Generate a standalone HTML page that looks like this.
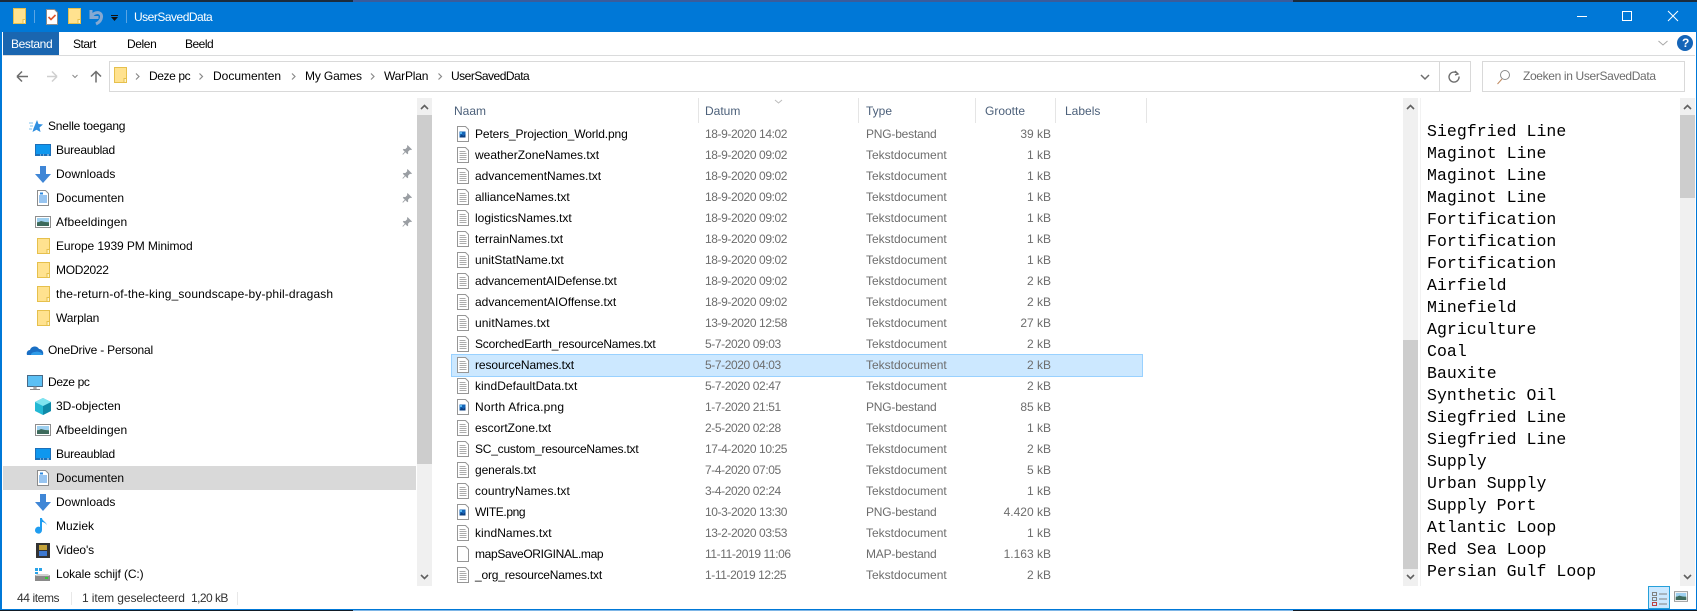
<!DOCTYPE html>
<html><head><meta charset="utf-8"><title>UserSavedData</title>
<style>
html,body{margin:0;padding:0;width:1697px;height:611px;overflow:hidden;background:#fff}
body{font-family:"Liberation Sans",sans-serif;font-size:12px;color:#000;position:relative}
.b{position:absolute}
.t{position:absolute;white-space:nowrap;line-height:16px;height:16px}
svg{position:absolute;left:0;top:0}
.r{position:absolute;left:0;width:1200px;height:16px}
.r span{position:absolute;white-space:nowrap;line-height:16px;top:0}
.n{left:475px}.d{left:705px;color:#6d6d6d;letter-spacing:-.4px}.y{left:866px;color:#6d6d6d}.s{left:951px;width:100px;text-align:right;color:#6d6d6d}
.g{letter-spacing:-.2px}
.h{color:#4c607a}
.p{position:absolute;left:1427px;font-family:"Liberation Mono",monospace;font-size:16.5px;line-height:22px;height:22px;white-space:pre;letter-spacing:.05px}
</style></head><body>
<div class="b" style="left:0;top:0;width:1697px;height:2px;background:#1b2b3c"></div>
<div class="b" style="left:353px;top:0;width:940px;height:2px;background:#3a5c9c"></div>
<div class="b" style="left:0;top:2px;width:1697px;height:30px;background:#0078d7"></div>
<div class="b" style="left:3px;top:32px;width:56px;height:23px;background:#1a66b0"></div>
<div class="b" style="left:3px;top:55px;width:1692px;height:1px;background:#dadbdc"></div>
<div class="b" style="left:109px;top:61px;width:1360px;height:29px;border:1px solid #d9d9d9"></div>
<div class="b" style="left:1439px;top:61px;width:1px;height:30px;background:#d9d9d9"></div>
<div class="b" style="left:1482px;top:61px;width:201px;height:29px;border:1px solid #d9d9d9"></div>
<div class="b" style="left:417px;top:98px;width:15px;height:488px;background:#f0f0f0"></div>
<div class="b" style="left:417px;top:115px;width:15px;height:349px;background:#cdcdcd"></div>
<div class="b" style="left:1403px;top:98px;width:15px;height:488px;background:#f0f0f0"></div>
<div class="b" style="left:1403px;top:340px;width:15px;height:229px;background:#cdcdcd"></div>
<div class="b" style="left:1420px;top:98px;width:1px;height:488px;background:#f2f2f2"></div>
<div class="b" style="left:1680px;top:98px;width:15px;height:488px;background:#f0f0f0"></div>
<div class="b" style="left:1680px;top:115px;width:15px;height:83px;background:#cdcdcd"></div>
<div class="b" style="left:3px;top:466px;width:413px;height:24px;background:#d9d9d9"></div>
<div class="b" style="left:451px;top:354px;width:690px;height:21px;background:#cce8ff;border:1px solid #99d1ff"></div>
<div class="b" style="left:698px;top:98px;width:1px;height:25px;background:#e5e5e5"></div>
<div class="b" style="left:858px;top:98px;width:1px;height:25px;background:#e5e5e5"></div>
<div class="b" style="left:975px;top:98px;width:1px;height:25px;background:#e5e5e5"></div>
<div class="b" style="left:1055px;top:98px;width:1px;height:25px;background:#e5e5e5"></div>
<div class="b" style="left:1146px;top:98px;width:1px;height:25px;background:#e5e5e5"></div>
<div class="b" style="left:71px;top:592px;width:1px;height:13px;background:#e8e8e8"></div>
<div class="b" style="left:237px;top:592px;width:1px;height:13px;background:#e8e8e8"></div>
<div class="b" style="left:1648px;top:586px;width:20px;height:21px;background:#cce8ff;border:1px solid #26a0da"></div>
<div class="b" style="left:0;top:2px;width:2px;height:607px;background:#0078d7"></div>
<div class="b" style="left:1696px;top:2px;width:1px;height:607px;background:#0078d7"></div>
<div class="b" style="left:0;top:609px;width:1697px;height:1px;background:#0078d7"></div>
<div class="b" style="left:0;top:610px;width:1697px;height:1px;background:#111b26"></div>
<div class="b" style="left:353px;top:610px;width:940px;height:1px;background:#7fb6e6"></div>

<svg width="1697" height="611" viewBox="0 0 1697 611">
<defs>
<symbol id="folder" viewBox="0 0 13 16"><rect x=".5" y=".5" width="12" height="15" fill="#ffe28f" stroke="#e6c04c"/><path d="M10 11.500h2.500v4h-2.500z" fill="#fff4c8" stroke="#e6c04c"/></symbol>
<symbol id="txt" viewBox="0 0 12 16"><path d="M.5.500h8l3 3v12h-11z" fill="#fff" stroke="#969696"/><path d="M2.500 4.500h6M2.500 6.500h7M2.500 8.500h7M2.500 10.500h7M2.500 12.500h7" stroke="#ababab" fill="none"/></symbol>
<symbol id="png" viewBox="0 0 12 16"><path d="M.5.500h8l3 3v12h-11z" fill="#fff" stroke="#969696"/><rect x="2.500" y="5.500" width="6" height="6" fill="#1565b8"/><path d="M2.500 11.500l2-3 2 1.500 2-2v3.500z" fill="#0c3f80"/><rect x="3" y="6" width="2" height="2" fill="#58b8f0"/></symbol>
<symbol id="blank" viewBox="0 0 12 16"><path d="M.5.500h8l3 3v12h-11z" fill="#fff" stroke="#969696"/></symbol>
<symbol id="desk" viewBox="0 0 16 12"><rect width="16" height="12" fill="#1c6fb8"/><rect x="1" y="1" width="14" height="9" fill="#0f97ee"/><path d="M5 11h1M8 11h1M12 11h2" stroke="#cfe6f8"/></symbol>
<symbol id="down" viewBox="0 0 16 17"><path d="M5 0h6v8h5l-8 9-8-9h5z" fill="#3f86d6"/></symbol>
<symbol id="doc" viewBox="0 0 12 16"><path d="M.5.500h8l3 3v12h-11z" fill="#fff" stroke="#8c8c8c"/><path d="M2 6h8M2 8h8M2 10h8M2 12h8" stroke="#2f8ae0"/><path d="M3 2.500h3v2h-3z" fill="#2f8ae0"/></symbol>
<symbol id="pic" viewBox="0 0 16 12"><rect x=".5" y=".5" width="15" height="11" fill="#fff" stroke="#8e8e8e"/><rect x="2" y="2" width="12" height="4" fill="#9ed0f0"/><rect x="2" y="6" width="12" height="4" fill="#5f8f78"/><path d="M2 7l4-2 8 2v3h-12z" fill="#3d6a5c"/></symbol>
<symbol id="pin" viewBox="0 0 10 10"><path d="M5.500 0l4.500 4.500-1 .6-1-.3-2 2 .2 1.700-.8.8-2-2-2.400 2.400-.6-.6 2.400-2.400-2-2 .8-.8 1.700.2 2-2-.3-1z" fill="#9a9ea3"/></symbol>
</defs>

<!-- titlebar -->
<use href="#folder" x="13" y="8" width="13" height="16"/>
<rect x="34" y="10" width="1" height="13" fill="#5aa5e4"/>
<path d="M46.500 9.500h8l3 3v12h-11z" fill="#fff" stroke="#8c8c8c"/><path d="M48.500 17l2.500 2.500 4.500-4.500" fill="none" stroke="#e0542a" stroke-width="1.600"/>
<use href="#folder" x="68" y="8" width="13" height="16"/>
<path d="M91 10v7.500h7.500" fill="none" stroke="#86a9d2" stroke-width="3"/><path d="M91.500 16.500c3-5.500 10.500-5 10 .5-.2 3-2.500 5.500-5.500 7" fill="none" stroke="#86a9d2" stroke-width="3"/>
<rect x="111" y="15" width="7" height="1" fill="#111"/><path d="M111 17h7l-3.500 4z" fill="#111"/>
<rect x="126" y="10" width="1" height="13" fill="#5aa5e4"/>
<rect x="1577" y="16" width="10" height="1" fill="#fff"/>
<rect x="1622.500" y="11.500" width="9" height="9" fill="none" stroke="#fff"/>
<path d="M1668 11l10 10M1678 11l-10 10" stroke="#fff" fill="none"/>
<path d="M1658.500 41l4.500 4 4.500-4" fill="none" stroke="#a8a8a8"/>
<circle cx="1685" cy="43" r="8" fill="#1565b8"/>

<!-- nav -->
<path d="M17 76.500h11M17 76.500l5-5M17 76.500l5 5" fill="none" stroke="#6d6d6d" stroke-width="1.500"/>
<path d="M47 76.500h10M57 76.500l-5-5M57 76.500l-5 5" fill="none" stroke="#cfcfcf" stroke-width="1.500"/>
<path d="M72.500 75l2.500 2.500 2.500-2.500" fill="none" stroke="#8a8a8a"/>
<path d="M96 82.500v-11M91 76.500l5-5 5 5" fill="none" stroke="#6d6d6d" stroke-width="1.500"/>
<use href="#folder" x="114" y="67" width="13" height="16"/>
<g fill="none" stroke="#8a8a8a" stroke-width="1.200"><path d="M136 73.500l3 3-3 3M199.500 73.500l3 3-3 3M292 73.500l3 3-3 3M371 73.500l3 3-3 3M438.500 73.500l3 3-3 3"/></g>
<path d="M1421 75l4 4 4-4" fill="none" stroke="#6d6d6d" stroke-width="1.500"/>
<path d="M1459 74a5 5 0 1 0 1 2.500M1456 71l3 3-3 1" fill="none" stroke="#6d6d6d" stroke-width="1.400" transform="translate(-1 0)"/>
<circle cx="1505" cy="75" r="4.500" fill="none" stroke="#8a8a8a"/><path d="M1502 79l-4.500 5" stroke="#c08a60" fill="none"/>

<!-- nav pane icons -->
<path d="M37 120l1.500 4 4.500.5-3.500 3 1 4.500-4-2.300-4 2.300 1-3.500z" fill="#2f8fe0"/><path d="M29 123h4M30 126h3M29 129h3" stroke="#7dc0ee"/>
<use href="#desk" x="35" y="144" width="16" height="12"/>
<use href="#down" x="35" y="166" width="16" height="17"/>
<use href="#doc" x="37" y="190" width="12" height="16"/>
<use href="#pic" x="35" y="216" width="16" height="12"/>
<use href="#folder" x="37" y="238" width="13" height="16"/>
<use href="#folder" x="37" y="262" width="13" height="16"/>
<use href="#folder" x="37" y="286" width="13" height="16"/>
<use href="#folder" x="37" y="310" width="13" height="16"/>
<path d="M27 355c-1-3 1-5 3-5 1-4 7-5 9-1 3 0 5 3 4 6z" fill="#1a6fc4"/><path d="M31 355c0-2 2-3 4-3 2-1 7 0 8 3z" fill="#2f9be8"/>
<rect x="27.500" y="375.500" width="15" height="11" fill="#5cc0f4" stroke="#4a6a86"/><path d="M34 387h2v2h-2zM30 389.500h10" stroke="#8a8a8a" fill="none"/>
<path d="M35 402l8-4 8 4v9l-8 4-8-4z" fill="#23b8d4"/><path d="M43 406l8-4v9l-8 4z" fill="#0f8aa8"/><path d="M35 402l8-4 8 4-8 4z" fill="#7fe4f0"/>
<use href="#pic" x="35" y="424" width="16" height="12"/>
<use href="#desk" x="35" y="448" width="16" height="12"/>
<use href="#doc" x="37" y="470" width="12" height="16"/>
<use href="#down" x="35" y="494" width="16" height="17"/>
<path d="M42 518v12a3.500 3.500 0 1 1-2-3v-9h2c0 3 5 4 5 8 0-2-3-4-5-4" fill="#1f9df0"/>
<rect x="36" y="543" width="14" height="15" fill="#333"/><rect x="39" y="545" width="8" height="5" fill="#c4a33a"/><rect x="39" y="551" width="8" height="5" fill="#3d78d0"/>
<rect x="35" y="575" width="15" height="6" fill="#8a8a8a"/><path d="M37 574h11l2 2h-15z" fill="#d0d0d0"/><rect x="45" y="577" width="3" height="2" fill="#37c837"/><rect x="35" y="568" width="3" height="3" fill="#29a3e8"/><rect x="39" y="568" width="3" height="3" fill="#29a3e8"/><rect x="35" y="572" width="3" height="2" fill="#29a3e8"/>
<use href="#pin" x="402" y="145" width="10" height="10"/>
<use href="#pin" x="402" y="169" width="10" height="10"/>
<use href="#pin" x="402" y="193" width="10" height="10"/>
<use href="#pin" x="402" y="217" width="10" height="10"/>

<!-- scroll arrows -->
<g fill="none" stroke="#606060" stroke-width="1.600">
<path d="M421 109l3.500-3.500 3.500 3.500M421 575l3.500 3.500 3.500-3.500"/>
<path d="M1407 109l3.500-3.500 3.500 3.500M1407 575l3.500 3.500 3.500-3.500"/>
<path d="M1684 109l3.500-3.500 3.500 3.500M1684 575l3.500 3.500 3.500-3.500"/>
</g>
<path d="M775 100l3.500 3 3.500-3" fill="none" stroke="#bcbcbc"/>

<!-- file icons -->
<use href="#png" x="457" y="126" width="12" height="16"/>
<use href="#txt" x="457" y="147" width="12" height="16"/>
<use href="#txt" x="457" y="168" width="12" height="16"/>
<use href="#txt" x="457" y="189" width="12" height="16"/>
<use href="#txt" x="457" y="210" width="12" height="16"/>
<use href="#txt" x="457" y="231" width="12" height="16"/>
<use href="#txt" x="457" y="252" width="12" height="16"/>
<use href="#txt" x="457" y="273" width="12" height="16"/>
<use href="#txt" x="457" y="294" width="12" height="16"/>
<use href="#txt" x="457" y="315" width="12" height="16"/>
<use href="#txt" x="457" y="336" width="12" height="16"/>
<use href="#txt" x="457" y="357" width="12" height="16"/>
<use href="#txt" x="457" y="378" width="12" height="16"/>
<use href="#png" x="457" y="399" width="12" height="16"/>
<use href="#txt" x="457" y="420" width="12" height="16"/>
<use href="#txt" x="457" y="441" width="12" height="16"/>
<use href="#txt" x="457" y="462" width="12" height="16"/>
<use href="#txt" x="457" y="483" width="12" height="16"/>
<use href="#png" x="457" y="504" width="12" height="16"/>
<use href="#txt" x="457" y="525" width="12" height="16"/>
<use href="#blank" x="457" y="546" width="12" height="16"/>
<use href="#txt" x="457" y="567" width="12" height="16"/>

<!-- view buttons -->
<g fill="none" stroke="#808080"><rect x="1652.500" y="592.500" width="4" height="3"/><rect x="1652.500" y="597.500" width="4" height="3"/><rect x="1652.500" y="602.500" width="4" height="3" stroke="#c04040"/><path d="M1659 594h8M1659 599h8M1659 604h8"/></g>
<use href="#pic" x="1674" y="591" width="14" height="11"/>
</svg>

<div class="t" style="left:134px;top:9px;color:#fff;letter-spacing:-.5px">UserSavedData</div>
<div class="t" style="left:1682px;top:35px;color:#fff;font-weight:bold">?</div>
<div class="t" style="left:11px;top:36px;color:#fff;letter-spacing:-.4px">Bestand</div>
<div class="t" style="left:73px;top:36px;letter-spacing:-.5px">Start</div>
<div class="t" style="left:127px;top:36px;letter-spacing:-.4px">Delen</div>
<div class="t" style="left:185px;top:36px;letter-spacing:-.5px">Beeld</div>
<div class="t" style="left:149px;top:68px;letter-spacing:-.4px">Deze pc</div>
<div class="t" style="left:213px;top:68px">Documenten</div>
<div class="t" style="left:305px;top:68px;letter-spacing:-.15px">My Games</div>
<div class="t" style="left:384px;top:68px;letter-spacing:-.2px">WarPlan</div>
<div class="t" style="left:451px;top:68px;letter-spacing:-.5px">UserSavedData</div>
<div class="t" style="left:1523px;top:68px;color:#6d6d6d;letter-spacing:-.35px">Zoeken in UserSavedData</div>

<div class="t" style="left:48px;top:118px;letter-spacing:-.2px">Snelle toegang</div>
<div class="t" style="left:56px;top:142px;letter-spacing:-.25px">Bureaublad</div>
<div class="t" style="left:56px;top:166px">Downloads</div>
<div class="t" style="left:56px;top:190px">Documenten</div>
<div class="t" style="left:56px;top:214px;letter-spacing:.1px">Afbeeldingen</div>
<div class="t" style="left:56px;top:238px;letter-spacing:-.1px">Europe 1939 PM Minimod</div>
<div class="t" style="left:56px;top:262px;letter-spacing:-.3px">MOD2022</div>
<div class="t" style="left:56px;top:286px;letter-spacing:.13px">the-return-of-the-king_soundscape-by-phil-dragash</div>
<div class="t" style="left:56px;top:310px;letter-spacing:-.15px">Warplan</div>
<div class="t" style="left:48px;top:342px;letter-spacing:-.2px">OneDrive - Personal</div>
<div class="t" style="left:48px;top:374px;letter-spacing:-.35px">Deze pc</div>
<div class="t" style="left:56px;top:398px">3D-objecten</div>
<div class="t" style="left:56px;top:422px;letter-spacing:.1px">Afbeeldingen</div>
<div class="t" style="left:56px;top:446px;letter-spacing:-.25px">Bureaublad</div>
<div class="t" style="left:56px;top:470px">Documenten</div>
<div class="t" style="left:56px;top:494px">Downloads</div>
<div class="t" style="left:56px;top:518px">Muziek</div>
<div class="t" style="left:56px;top:542px;letter-spacing:-.1px">Video's</div>
<div class="t" style="left:56px;top:566px;letter-spacing:-.1px">Lokale schijf (C:)</div>

<div class="t h" style="left:454px;top:103px">Naam</div>
<div class="t h" style="left:705px;top:103px">Datum</div>
<div class="t h" style="left:866px;top:103px">Type</div>
<div class="t h" style="left:985px;top:103px">Grootte</div>
<div class="t h" style="left:1065px;top:103px">Labels</div>

<div class="r" style="top:126px"><span class="n" style="letter-spacing:-.12px">Peters_Projection_World.png</span><span class="d">18-9-2020 14:02</span><span class="y g">PNG-bestand</span><span class="s">39 kB</span></div>
<div class="r" style="top:147px"><span class="n">weatherZoneNames.txt</span><span class="d">18-9-2020 09:02</span><span class="y">Tekstdocument</span><span class="s">1 kB</span></div>
<div class="r" style="top:168px"><span class="n">advancementNames.txt</span><span class="d">18-9-2020 09:02</span><span class="y">Tekstdocument</span><span class="s">1 kB</span></div>
<div class="r" style="top:189px"><span class="n">allianceNames.txt</span><span class="d">18-9-2020 09:02</span><span class="y">Tekstdocument</span><span class="s">1 kB</span></div>
<div class="r" style="top:210px"><span class="n">logisticsNames.txt</span><span class="d">18-9-2020 09:02</span><span class="y">Tekstdocument</span><span class="s">1 kB</span></div>
<div class="r" style="top:231px"><span class="n">terrainNames.txt</span><span class="d">18-9-2020 09:02</span><span class="y">Tekstdocument</span><span class="s">1 kB</span></div>
<div class="r" style="top:252px"><span class="n">unitStatName.txt</span><span class="d">18-9-2020 09:02</span><span class="y">Tekstdocument</span><span class="s">1 kB</span></div>
<div class="r" style="top:273px"><span class="n" style="letter-spacing:-.1px">advancementAIDefense.txt</span><span class="d">18-9-2020 09:02</span><span class="y">Tekstdocument</span><span class="s">2 kB</span></div>
<div class="r" style="top:294px"><span class="n">advancementAIOffense.txt</span><span class="d">18-9-2020 09:02</span><span class="y">Tekstdocument</span><span class="s">2 kB</span></div>
<div class="r" style="top:315px"><span class="n" style="letter-spacing:.1px">unitNames.txt</span><span class="d">13-9-2020 12:58</span><span class="y">Tekstdocument</span><span class="s">27 kB</span></div>
<div class="r" style="top:336px"><span class="n" style="letter-spacing:-.2px">ScorchedEarth_resourceNames.txt</span><span class="d">5-7-2020 09:03</span><span class="y">Tekstdocument</span><span class="s">2 kB</span></div>
<div class="r" style="top:357px"><span class="n" style="letter-spacing:-.1px">resourceNames.txt</span><span class="d">5-7-2020 04:03</span><span class="y">Tekstdocument</span><span class="s">2 kB</span></div>
<div class="r" style="top:378px"><span class="n" style="letter-spacing:.05px">kindDefaultData.txt</span><span class="d">5-7-2020 02:47</span><span class="y">Tekstdocument</span><span class="s">2 kB</span></div>
<div class="r" style="top:399px"><span class="n" style="letter-spacing:.2px">North Africa.png</span><span class="d">1-7-2020 21:51</span><span class="y g">PNG-bestand</span><span class="s">85 kB</span></div>
<div class="r" style="top:420px"><span class="n">escortZone.txt</span><span class="d">2-5-2020 02:28</span><span class="y">Tekstdocument</span><span class="s">1 kB</span></div>
<div class="r" style="top:441px"><span class="n" style="letter-spacing:-.22px">SC_custom_resourceNames.txt</span><span class="d">17-4-2020 10:25</span><span class="y">Tekstdocument</span><span class="s">2 kB</span></div>
<div class="r" style="top:462px"><span class="n" style="letter-spacing:-.1px">generals.txt</span><span class="d">7-4-2020 07:05</span><span class="y">Tekstdocument</span><span class="s">5 kB</span></div>
<div class="r" style="top:483px"><span class="n" style="letter-spacing:.1px">countryNames.txt</span><span class="d">3-4-2020 02:24</span><span class="y">Tekstdocument</span><span class="s">1 kB</span></div>
<div class="r" style="top:504px"><span class="n" style="letter-spacing:-.4px">WITE.png</span><span class="d">10-3-2020 13:30</span><span class="y g">PNG-bestand</span><span class="s">4.420 kB</span></div>
<div class="r" style="top:525px"><span class="n" style="letter-spacing:.05px">kindNames.txt</span><span class="d">13-2-2020 03:53</span><span class="y">Tekstdocument</span><span class="s">1 kB</span></div>
<div class="r" style="top:546px"><span class="n" style="letter-spacing:-.34px">mapSaveORIGINAL.map</span><span class="d">11-11-2019 11:06</span><span class="y g">MAP-bestand</span><span class="s">1.163 kB</span></div>
<div class="r" style="top:567px"><span class="n" style="letter-spacing:-.2px">_org_resourceNames.txt</span><span class="d">1-11-2019 12:25</span><span class="y">Tekstdocument</span><span class="s">2 kB</span></div>

<div class="p" style="top:121px">Siegfried Line</div>
<div class="p" style="top:143px">Maginot Line</div>
<div class="p" style="top:165px">Maginot Line</div>
<div class="p" style="top:187px">Maginot Line</div>
<div class="p" style="top:209px">Fortification</div>
<div class="p" style="top:231px">Fortification</div>
<div class="p" style="top:253px">Fortification</div>
<div class="p" style="top:275px">Airfield</div>
<div class="p" style="top:297px">Minefield</div>
<div class="p" style="top:319px">Agriculture</div>
<div class="p" style="top:341px">Coal</div>
<div class="p" style="top:363px">Bauxite</div>
<div class="p" style="top:385px">Synthetic Oil</div>
<div class="p" style="top:407px">Siegfried Line</div>
<div class="p" style="top:429px">Siegfried Line</div>
<div class="p" style="top:451px">Supply</div>
<div class="p" style="top:473px">Urban Supply</div>
<div class="p" style="top:495px">Supply Port</div>
<div class="p" style="top:517px">Atlantic Loop</div>
<div class="p" style="top:539px">Red Sea Loop</div>
<div class="p" style="top:561px">Persian Gulf Loop</div>

<div class="t" style="left:17px;top:590px;color:#333;letter-spacing:-.4px">44 items</div>
<div class="t" style="left:82px;top:590px;color:#333;letter-spacing:-.1px">1 item geselecteerd</div>
<div class="t" style="left:191px;top:590px;color:#333;letter-spacing:-.55px">1,20 kB</div>
</body></html>
